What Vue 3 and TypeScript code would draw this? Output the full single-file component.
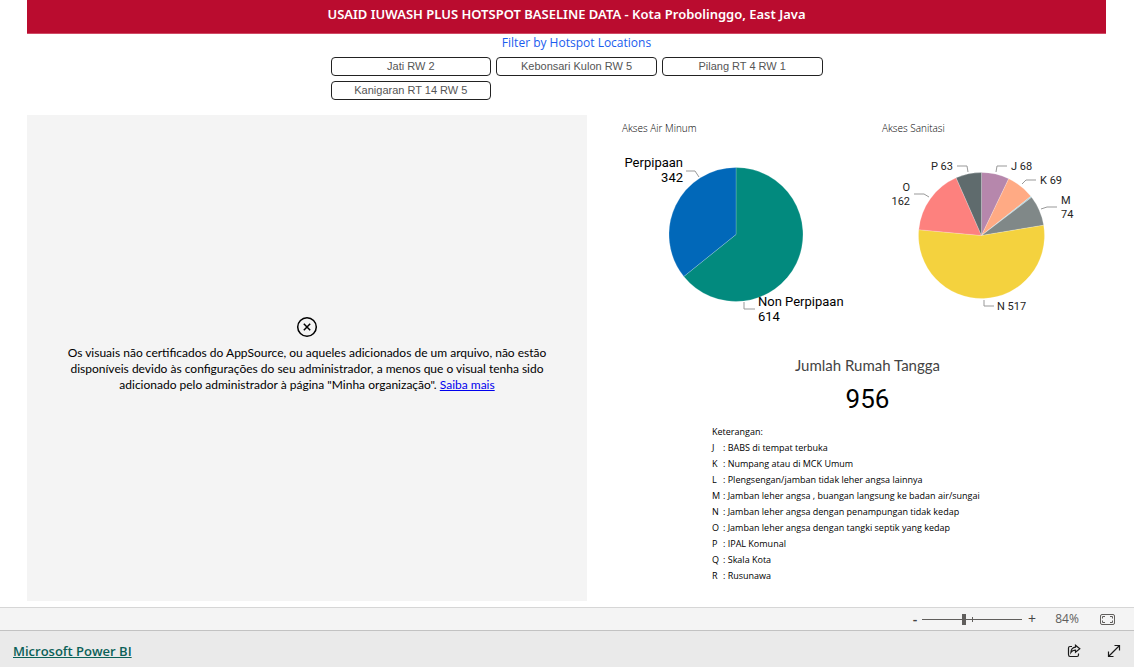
<script setup lang="ts">
import { ref } from 'vue'

interface Slice {
  name: string
  value: number
  color: string
}

interface PieLabel {
  lines: string[]
  x: number
  y: number
  anchor: 'start' | 'end'
  leader: string
}

interface Pie {
  title: string
  cx: number
  cy: number
  r: number
  fontSize: number
  lineHeight: number
  slices: Slice[]
  labels: PieLabel[]
}

const locations = ['Jati RW 2', 'Kebonsari Kulon RW 5', 'Pilang RT 4 RW 1', 'Kanigaran RT 14 RW 5']
const selected = ref<string | null>(null)
const zoom = ref(84)

const water: Pie = {
  title: 'Akses Air Minum',
  cx: 149,
  cy: 94.5,
  r: 67,
  fontSize: 13,
  lineHeight: 15,
  slices: [
    { name: 'Non Perpipaan', value: 614, color: '#028a7e' },
    { name: 'Perpipaan', value: 342, color: '#0168b9' },
  ],
  labels: [
    { lines: ['Perpipaan', '342'], x: 96, y: 27, anchor: 'end', leader: '99,31 108,31 112,37' },
    { lines: ['Non Perpipaan', '614'], x: 171, y: 166, anchor: 'start', leader: '157,162 157,169 168,169' },
  ],
}

const sanitation: Pie = {
  title: 'Akses Sanitasi',
  cx: 134.5,
  cy: 95.5,
  r: 63,
  fontSize: 11,
  lineHeight: 14,
  slices: [
    { name: 'J', value: 68, color: '#b687ac' },
    { name: 'K', value: 69, color: '#ffaa84' },
    { name: 'L', value: 3, color: '#a1cfdc' },
    { name: 'M', value: 74, color: '#808888' },
    { name: 'N', value: 517, color: '#f4d23e' },
    { name: 'O', value: 162, color: '#fd817e' },
    { name: 'P', value: 63, color: '#5f6b6d' },
  ],
  labels: [
    { lines: ['P 63'], x: 106, y: 30, anchor: 'end', leader: '110,26 120,26 121,32' },
    { lines: ['J 68'], x: 164, y: 30, anchor: 'start', leader: '149,32 150,26 160,26' },
    { lines: ['K 69'], x: 193, y: 44, anchor: 'start', leader: '175,44 179,40 189,40' },
    { lines: ['M', '74'], x: 214, y: 64, anchor: 'start', leader: '194,69 200,67 210,67' },
    { lines: ['N 517'], x: 150, y: 170, anchor: 'start', leader: '137,160 137,166 147,166' },
    { lines: ['O', '162'], x: 63, y: 51, anchor: 'end', leader: '67,54 77,54 82,57' },
  ],
}

const pies = [water, sanitation]

const legend = [
  ['J', 'BABS di tempat terbuka'],
  ['K', 'Numpang atau di MCK Umum'],
  ['L', 'Plengsengan/jamban tidak leher angsa lainnya'],
  ['M', 'Jamban leher angsa , buangan langsung ke badan air/sungai'],
  ['N', 'Jamban leher angsa dengan penampungan tidak kedap'],
  ['O', 'Jamban leher angsa dengan tangki septik yang kedap'],
  ['P', 'IPAL Komunal'],
  ['Q', 'Skala Kota'],
  ['R', 'Rusunawa'],
]

function wedges(pie: Pie) {
  const total = pie.slices.reduce((sum, s) => sum + s.value, 0)
  let angle = -Math.PI / 2
  return pie.slices.map((s) => {
    const sweep = (s.value / total) * Math.PI * 2
    const x1 = pie.cx + pie.r * Math.cos(angle)
    const y1 = pie.cy + pie.r * Math.sin(angle)
    angle += sweep
    const x2 = pie.cx + pie.r * Math.cos(angle)
    const y2 = pie.cy + pie.r * Math.sin(angle)
    const large = sweep > Math.PI ? 1 : 0
    return {
      name: s.name,
      color: s.color,
      d: `M${pie.cx} ${pie.cy}L${x1} ${y1}A${pie.r} ${pie.r} 0 ${large} 1 ${x2} ${y2}Z`,
    }
  })
}

function toggle(name: string) {
  selected.value = selected.value === name ? null : name
}

function step(by: number) {
  zoom.value = Math.min(200, Math.max(0, zoom.value + by))
}
</script>

<template>
  <div class="page">
    <main class="report">
      <h1 class="banner">USAID IUWASH PLUS HOTSPOT BASELINE DATA - Kota Probolinggo, East Java</h1>

      <section class="filter">
        <h2 class="filter-title">Filter by Hotspot Locations</h2>
        <div class="filter-grid">
          <button
            v-for="name in locations"
            :key="name"
            type="button"
            class="chip"
            :class="{ active: selected === name }"
            :aria-pressed="selected === name"
            @click="toggle(name)"
          >
            {{ name }}
          </button>
        </div>
      </section>

      <div class="body">
        <section class="blocked">
          <svg class="blocked-icon" viewBox="0 0 22 22" aria-hidden="true">
            <circle cx="11" cy="11" r="9.3" />
            <path d="M7.800 7.800l6.400 6.400M14.200 7.800l-6.400 6.400" />
          </svg>
          <p class="blocked-text">
            Os visuais não certificados do AppSource, ou aqueles adicionados de um arquivo, não estão<br />
            disponíveis devido às configurações do seu administrador, a menos que o visual tenha sido<br />
            adicionado pelo administrador à página "Minha organização". <a href="#">Saiba mais</a>
          </p>
        </section>

        <section class="side">
          <div class="charts">
            <figure v-for="pie in pies" :key="pie.title" class="chart">
              <figcaption>{{ pie.title }}</figcaption>
              <svg viewBox="0 0 259 200" preserveAspectRatio="xMinYMin meet" role="img" :aria-label="pie.title">
                <path v-for="w in wedges(pie)" :key="w.name" class="wedge" :d="w.d" :fill="w.color" />
                <g v-for="label in pie.labels" :key="label.lines[0]">
                  <polyline class="leader" :points="label.leader" />
                  <text
                    v-for="(line, i) in label.lines"
                    :key="line"
                    :x="label.x"
                    :y="label.y + i * pie.lineHeight"
                    :font-size="pie.fontSize"
                    :text-anchor="label.anchor"
                    :class="pie.fontSize > 12 ? 'label-strong' : 'label'"
                  >{{ line }}</text>
                </g>
              </svg>
            </figure>
          </div>

          <div class="card">
            <h2 class="card-title">Jumlah Rumah Tangga</h2>
            <p class="card-value">956</p>
          </div>

          <div class="legend">
            <p class="legend-title">Keterangan:</p>
            <dl>
              <div v-for="[key, text] in legend" :key="key" class="legend-row">
                <dt>{{ key }}</dt>
                <dd>: {{ text }}</dd>
              </div>
            </dl>
          </div>
        </section>
      </div>
    </main>

    <div class="status">
      <button type="button" class="step" aria-label="Zoom out" @click="step(-10)">-</button>
      <div class="slider">
        <input v-model.number="zoom" type="range" min="0" max="200" aria-label="Zoom" />
      </div>
      <button type="button" class="step plus" aria-label="Zoom in" @click="step(10)">+</button>
      <output class="percent">{{ zoom }}%</output>
      <button type="button" class="icon-button" aria-label="Fit to page">
        <svg class="fit" viewBox="0 0 15 11" aria-hidden="true">
          <rect x="0.5" y="0.5" width="14" height="10" rx="1.5" />
          <path d="M5 2.500H2.500V4.500M2.500 6.500V8.500H5M10 2.500h2.500V4.500M12.500 6.500V8.500H10" />
        </svg>
      </button>
    </div>

    <footer class="footer">
      <a class="brand" href="#">Microsoft Power BI</a>
      <div class="actions">
        <button type="button" class="icon-button" aria-label="Share">
          <svg class="action" viewBox="0 0 14 14" aria-hidden="true">
            <path d="M5 2.500H3Q1.500 2.500 1.500 4v6.500Q1.500 12.500 3 12.500h7Q11.500 12.500 11.500 11V9.500" />
            <path d="M8.500 1.200L12.800 4.700L8.500 8.200V6.200Q5.500 6 3.900 8.500Q4.200 3.500 8.500 3.200Z" />
          </svg>
        </button>
        <button type="button" class="icon-button" aria-label="Full screen">
          <svg class="action" viewBox="0 0 14 14" aria-hidden="true">
            <path d="M1.500 12.500L12.500 1.500M7.500 1.500h5v5M1.500 7.500v5h5" />
          </svg>
        </button>
      </div>
    </footer>
  </div>
</template>

<style>
body {
  margin: 0;
}
</style>

<style scoped>
.page {
  display: flex;
  flex-direction: column;
  min-height: 100vh;
  background: #fff;
  color: #000;
  font-family: "Open Sans", "Noto Sans", sans-serif;
}

h1, h2, p, dl, dd, figure {
  margin: 0;
}

button {
  font-family: inherit;
  cursor: pointer;
}

.report {
  flex: 1;
  display: flex;
  flex-direction: column;
  padding: 0 28px 6px 27px;
}

.banner {
  padding: 4px 0 9px;
  border-bottom: 1px solid #cf4a65;
  background: #ba0c2f;
  color: #fff;
  font-family: "Noto Sans", sans-serif;
  font-size: 13px;
  font-weight: 600;
  line-height: 20px;
  text-align: center;
}

.filter {
  padding-left: 20px;
}

.filter-title {
  color: #1a5cee;
  font-size: 12px;
  font-weight: 400;
  line-height: 18px;
  text-align: center;
}

.filter-grid {
  display: grid;
  grid-template-columns: repeat(3, 1fr);
  gap: 5px;
  max-width: 492px;
  margin: 5px auto 0;
}

.chip {
  height: 19px;
  padding: 0;
  border: 1px solid #222;
  border-radius: 4px;
  background: #fff;
  color: #555;
  font: 11px/17px "Liberation Sans", Arial, sans-serif;
}

.chip.active {
  background: #e6e6e6;
}

.body {
  flex: 1;
  display: grid;
  grid-template-columns: minmax(0, 560fr) minmax(0, 519fr);
  margin-top: 15px;
}

.blocked {
  display: flex;
  flex-direction: column;
  align-items: center;
  justify-content: center;
  padding-bottom: 8px;
  background: #f4f4f4;
}

.blocked-icon {
  width: 22px;
  height: 22px;
  fill: none;
  stroke: #000;
  stroke-width: 1.5;
}

.blocked-text {
  margin-top: 7px;
  font-family: Lato, sans-serif;
  font-size: 12px;
  line-height: 16px;
  text-align: center;
  white-space: nowrap;
}

.blocked-text a {
  color: #0000ee;
}

.charts {
  display: grid;
  grid-template-columns: minmax(0, 260fr) minmax(0, 259fr);
}

.chart figcaption {
  padding: 5px 0 4px 35px;
  color: #000;
  font-size: 10px;
  font-weight: 300;
  line-height: 16px;
}

.chart svg {
  display: block;
  width: 100%;
  height: 200px;
  font-family: Roboto, sans-serif;
}

.wedge {
  stroke: #fff;
  stroke-opacity: 0.4;
  stroke-width: 0.5;
}

.leader {
  fill: none;
  stroke: #999;
}

.label {
  fill: #252423;
}

.label-strong {
  fill: #000;
}

.card {
  padding-left: 42px;
  text-align: center;
}

.card-title {
  padding-top: 15px;
  color: #444;
  font-family: Lato, sans-serif;
  font-size: 15px;
  font-weight: 400;
  line-height: 20px;
}

.card-value {
  margin-top: 9px;
  font: 26px/30px Roboto, sans-serif;
}

.legend {
  padding: 10px 0 0 125px;
  font-size: 9px;
  line-height: 16px;
}

.legend-row {
  display: flex;
}

.legend-row dt {
  width: 11px;
}

.status {
  display: flex;
  align-items: center;
  justify-content: flex-end;
  height: 22px;
  padding-right: 19px;
  border-top: 1px solid #d6d6d6;
  border-bottom: 1px solid #c2c2c2;
  background: #f4f4f4;
  color: #605e5c;
}

.step {
  width: 14px;
  padding: 0;
  border: 0;
  background: none;
  color: #444;
  font-size: 14px;
  font-weight: 600;
  line-height: 20px;
}

.plus {
  width: 20px;
  font-weight: 400;
}

.slider {
  position: relative;
  display: flex;
  width: 100px;
  height: 12px;
}

.slider::after {
  content: "";
  position: absolute;
  top: 4px;
  left: 50%;
  width: 1px;
  height: 5px;
  background: #605e5c;
}

.slider input {
  width: 100%;
  height: 12px;
  margin: 0;
  appearance: none;
  background: linear-gradient(#605e5c, #605e5c) center / 100% 1px no-repeat;
}

.slider input::-webkit-slider-thumb {
  appearance: none;
  width: 4px;
  height: 11px;
  background: #605e5c;
}

.percent {
  width: 50px;
  font-size: 12px;
  line-height: 20px;
  text-align: center;
}

.icon-button {
  display: flex;
  padding: 0;
  border: 0;
  background: none;
}

.fit {
  width: 15px;
  height: 11px;
  margin-left: 8px;
  fill: none;
  stroke: #605e5c;
}

.footer {
  display: flex;
  align-items: center;
  justify-content: space-between;
  height: 36px;
  padding: 0 13px;
  background: #eaeaea;
}

.brand {
  padding-top: 4px;
  color: #0b6158;
  font-size: 13px;
  font-weight: 600;
  line-height: 20px;
}

.actions {
  display: flex;
  gap: 26px;
  padding-top: 3px;
}

.action {
  width: 14px;
  height: 14px;
  fill: none;
  stroke: #1a1a1a;
  stroke-width: 1.2;
}
</style>
